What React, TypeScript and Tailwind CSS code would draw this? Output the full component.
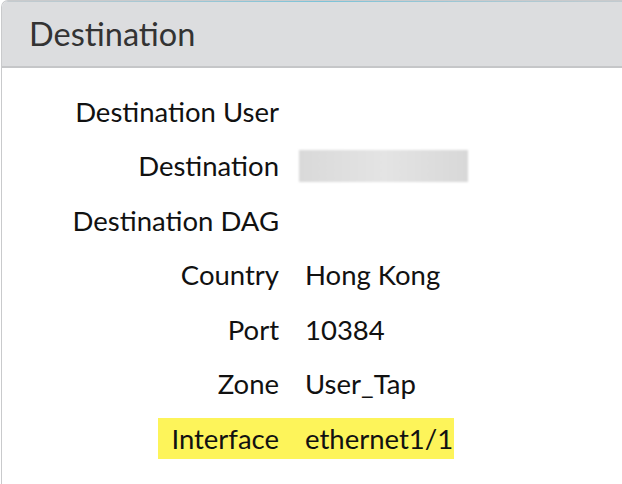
import React from 'react';

interface Row {
    label: string;
    value?: string;
    blurred?: boolean;
    highlight?: boolean;
}

const rows: Row[] = [
    { label: 'Destination User' },
    { label: 'Destination', blurred: true },
    { label: 'Destination DAG' },
    { label: 'Country', value: 'Hong Kong' },
    { label: 'Port', value: '10384' },
    { label: 'Zone', value: 'User_Tap' },
    { label: 'Interface', value: 'ethernet1/1', highlight: true },
];

const DetailRow: React.FC<{ row: Row }> = ({ row }) => {
    const hl = row.highlight ? 'bg-[#fdf45a] h-[41px] flex items-center' : '';
    return (
        <div className="flex items-center h-[54.5px]">
            <div className="w-[277px] flex justify-end shrink-0">
                <span className={row.highlight ? `${hl} pl-[13px]` : ''}>{row.label}</span>
            </div>
            <div className="flex-1 flex">
                {row.blurred ? (
                    <div className="ml-[20px] h-[32px] w-[169px] bg-gradient-to-r from-[#d9d9d9] via-[#e4e4e4] to-[#d8d8d8] blur-[1px]" />
                ) : row.value ? (
                    <span className={row.highlight ? `${hl} pl-[26px] pr-[1px]` : 'pl-[26px]'}>{row.value}</span>
                ) : null}
            </div>
        </div>
    );
};

export default function App() {
    return (
        <div className="w-[622px] h-[484px] bg-white overflow-hidden font-['Lato',sans-serif] text-[27.5px] text-[#111]">
            <div className="ml-[1px] mt-0 h-full w-[640px] rounded-tl-[7px] border-l border-t border-[#c9cacc] overflow-hidden">
                <div className="h-[1px] bg-gradient-to-r from-[#c6cbcf] via-[#7cc3d8] to-[#c6cbcf]" />
                <div className="h-[66px] bg-[#dcdddf] border-b-2 border-[#c5c6c8] flex items-center pl-[27px]">
                    <span className="text-[32.5px] text-[#333]">Destination</span>
                </div>
                <div className="pt-[16px]">
                    {rows.map((r) => (
                        <DetailRow key={r.label} row={r} />
                    ))}
                </div>
            </div>
        </div>
    );
}
